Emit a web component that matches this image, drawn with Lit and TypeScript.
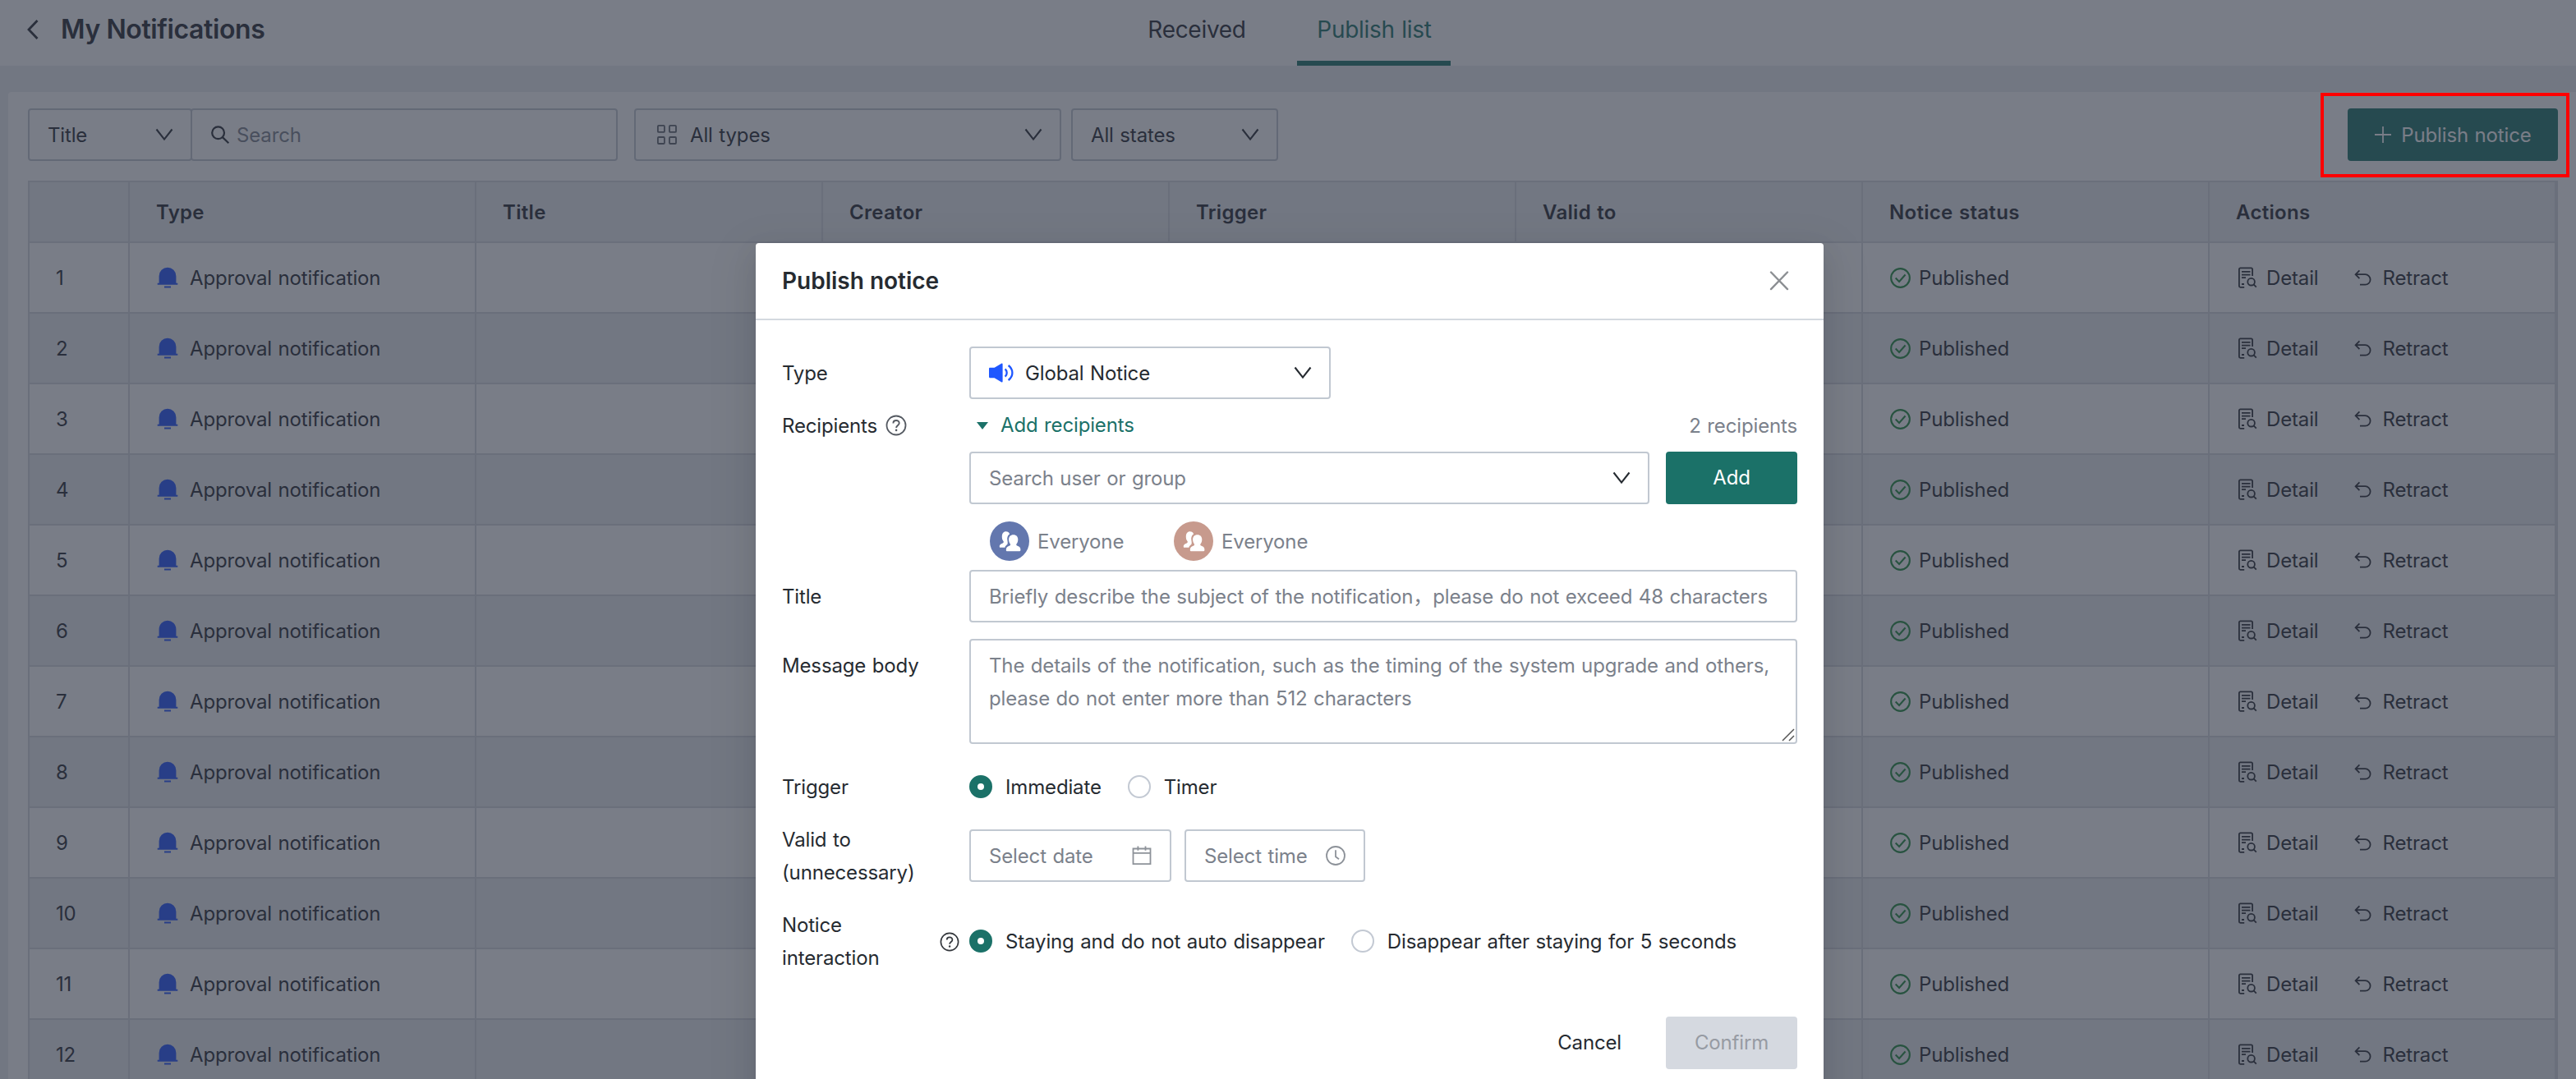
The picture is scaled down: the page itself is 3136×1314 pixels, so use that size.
import { LitElement, html, css, svg } from "lit";
import { customElement, property } from "lit/decorators.js";

const ROWS = Array.from({ length: 12 }, (_, i) => i + 1);
const COLUMNS = ["", "Type", "Title", "Creator", "Trigger", "Valid to", "Notice status", "Actions"];

const icons: Record<string, { box: string; body: unknown }> = {
  back: {
    box: "0 0 16 26",
    body: svg`<path d="M13.5 2 3 13l10.5 11" fill="none" stroke="currentColor" stroke-width="2.8"/>`,
  },
  chevron: {
    box: "0 0 22 16",
    body: svg`<path d="M1.5 1.5 11 13.6 20.5 1.5" fill="none" stroke="currentColor" stroke-width="2.1"/>`,
  },
  search: {
    box: "0 0 24 24",
    body: svg`<circle cx="9.6" cy="9.8" r="7.4" fill="none" stroke="currentColor" stroke-width="2.2"/><path d="m14.9 15.1 7.4 7.2" stroke="currentColor" stroke-width="2.2"/>`,
  },
  grid: {
    box: "0 0 24 24",
    body: svg`<g fill="none" stroke="currentColor" stroke-width="1.8"><rect x=".9" y=".9" width="8" height="8" rx="1"/><rect x="15" y=".9" width="8" height="8" rx="1"/><rect x=".9" y="15" width="8" height="8" rx="1"/><rect x="15" y="15" width="8" height="8" rx="1"/></g>`,
  },
  plus: {
    box: "0 0 22 22",
    body: svg`<path d="M11 1v20M1 11h20" stroke="currentColor" stroke-width="1.8"/>`,
  },
  bell: {
    box: "0 0 26 26",
    body: svg`<path d="M2.600 19.800V11.200a10.400 10.400 0 0 1 20.800 0v8.600h1.900v2H.7v-2zM9 23.400h8v2.200H9z" fill="currentColor"/>`,
  },
  check: {
    box: "0 0 24 24",
    body: svg`<circle cx="12" cy="12" r="10.9" fill="none" stroke="currentColor" stroke-width="2"/><path d="m6.400 12 4.200 4.200 7.200-8" fill="none" stroke="currentColor" stroke-width="2"/>`,
  },
  detail: {
    box: "0 0 24 26",
    body: svg`<g fill="none" stroke="currentColor" stroke-width="1.8"><path d="M8.200 24.800H3.400a1.500 1.500 0 0 1-1.500-1.500V2.900a1.500 1.500 0 0 1 1.500-1.500h13.200a1.500 1.500 0 0 1 1.500 1.500v8"/><path d="M5 5.800h10.500M5 9.600h10.500M5 13.200h5M5 21h3"/><circle cx="16.6" cy="18.2" r="4.3"/><path d="m19.600 21.400 3.200 3.200"/></g>`,
  },
  retract: {
    box: "0 0 22 20",
    body: svg`<path d="M6.400 1.300 1.600 6.200l4.800 4.900M1.800 6.200h11.600a6.200 6.200 0 0 1 0 12.400H7" fill="none" stroke="currentColor" stroke-width="1.8"/>`,
  },
  close: {
    box: "0 0 24 24",
    body: svg`<path d="m2 1.500 20 20.600M22 1.500 2 22.100" stroke="currentColor" stroke-width="2.4" stroke-linecap="round"/>`,
  },
  speaker: {
    box: "0 0 30 24",
    body: svg`<path d="M1.200 5.800h5.400L15.400.5c.6-.3 1.200 0 1.200.7v21.600c0 .7-.6 1-1.200.7l-8.800-5.300H1.200c-.7 0-1.200-.5-1.200-1.200V7c0-.7.5-1.200 1.200-1.200z" fill="currentColor"/><path d="M19.600 7.400c2.800 2.400 2.800 6.800 0 9.200M23.600 3c6.400 4.800 6.400 13.200 0 18" fill="none" stroke="currentColor" stroke-width="2.3"/>`,
  },
  help: {
    box: "0 0 26 26",
    body: svg`<circle cx="13" cy="13" r="11.5" fill="none" stroke="currentColor" stroke-width="1.8"/><path d="M9.400 10.400c0-4.600 7.300-4.500 7.300-.2 0 2.800-3.600 2.800-3.600 5.900" fill="none" stroke="currentColor" stroke-width="1.9"/><circle cx="13.1" cy="18.9" r="1.3" fill="currentColor"/>`,
  },
  caret: {
    box: "0 0 14 9",
    body: svg`<path d="M0 0h14L7 9z" fill="currentColor"/>`,
  },
  people: {
    box: "0 0 48 48",
    body: svg`<g fill="#fff"><path d="M19.600 12.200c2.600 0 4.400 1.600 4.400 3.300-2.400 1.400-3.200 4.600-2.600 7.600.3 1.600.5 3 .2 4.400-1.300 1.700-2.800 2-3.200 4.200h-6.400c-.9-2.400.5-4 3.300-5 1.600-.6 1.900-1.500 1.200-2.600-1.300-1.600-1.800-3.600-1.700-5.800.1-3.800 1.800-6.100 4.800-6.100z"/><path d="M28.700 16.200c3.600 0 5.600 2.300 5.600 5.800 0 2.200-.6 3.900-1.700 5.300-.7 1.100-.4 1.900 1 2.500 2.600 1 4 2.100 3.800 5.200-.1 1-.6 1.300-1.700 1.300H21.400c-1.100 0-1.600-.4-1.600-1.300-.1-3 1.300-4.300 3.900-5.200 1.500-.6 1.700-1.500 1-2.600-1.100-1.500-1.600-3.200-1.600-5.200 0-3.500 2-5.800 5.600-5.800z"/></g>`,
  },
  calendar: {
    box: "0 0 24 26",
    body: svg`<g fill="none" stroke="currentColor" stroke-width="1.8"><path d="M1.500 4.500h21v18.600h-21zM1.500 9.800h21M7.400 1.600v5.200M16.500 1.600v5.200"/></g>`,
  },
  clock: {
    box: "0 0 24 24",
    body: svg`<g fill="none" stroke="currentColor" stroke-width="1.8"><circle cx="12" cy="12" r="11"/><path d="M12 5.200v8l4 3"/></g>`,
  },
  resize: {
    box: "0 0 16 16",
    body: svg`<path d="M1 15 15 1M9 15l6-6" stroke="currentColor" stroke-width="1.5"/>`,
  },
};

@customElement("ui-icon")
class UiIcon extends LitElement {
  @property() name = "";
  static styles = css`
    :host { display: inline-flex; flex: none; }
    svg { width: 100%; height: 100%; display: block; }
  `;
  render() {
    const icon = icons[this.name];
    return icon ? html`<svg viewBox=${icon.box}>${icon.body}</svg>` : null;
  }
}

@customElement("ui-radio")
class UiRadio extends LitElement {
  @property({ type: Boolean }) checked = false;
  static styles = css`
    :host { display: flex; align-items: center; gap: 16px; }
    .dot { box-sizing: border-box; width: 28px; height: 28px; border-radius: 50%; border: 2px solid #c3c9d3; background: #fff; }
    .on { border: 10px solid #1b7168; }
    .text { padding-top: 2px; }
  `;
  render() {
    return html`<span class="dot ${this.checked ? "on" : ""}"></span><span class="text"><slot></slot></span>`;
  }
}

@customElement("notice-table")
class NoticeTable extends LitElement {
  static styles = css`
    :host { display: block; border: 2px solid #d5d7dd; border-bottom: 0; }
    .row { display: grid; grid-template-columns: 122px repeat(7, 422px); height: 86px; }
    .head { height: 74px; font-weight: 600; letter-spacing: 0.3px; }
    .head, .row:nth-child(odd) { background: #ecedf0; }
    .cell { box-sizing: border-box; display: flex; align-items: center; padding: 0 0 0 32px; border-right: 2px solid #d5d7dd; border-bottom: 2px solid #d5d7dd; }
    .text { padding-top: 2px; }
    .bell { width: 26px; height: 26px; margin: 0 14px 0 1px; color: #1f52ff; }
    .ok { width: 25px; height: 25px; margin: 0 10px 0 1px; color: #1f8a3c; }
    .doc { width: 24px; height: 26px; margin: 0 11px 0 2px; }
    .undo { width: 22px; height: 20px; margin: 0 12px 0 44px; }
  `;
  render() {
    return html`
      <div class="row head">${COLUMNS.map((c) => html`<div class="cell"><span class="text">${c}</span></div>`)}</div>
      ${ROWS.map(
        (n) => html`<div class="row">
          <div class="cell"><span class="text">${n}</span></div>
          <div class="cell"><ui-icon class="bell" name="bell"></ui-icon><span class="text">Approval notification</span></div>
          <div class="cell"></div>
          <div class="cell"></div>
          <div class="cell"></div>
          <div class="cell"></div>
          <div class="cell"><ui-icon class="ok" name="check"></ui-icon><span class="text">Published</span></div>
          <div class="cell">
            <ui-icon class="doc" name="detail"></ui-icon><span class="text">Detail</span>
            <ui-icon class="undo" name="retract"></ui-icon><span class="text">Retract</span>
          </div>
        </div>`
      )}
    `;
  }
}

@customElement("publish-dialog")
class PublishDialog extends LitElement {
  static styles = css`
    :host {
      display: block; box-sizing: border-box; width: 1300px; height: 1100px; background: #fff; color: #262b31;
      border-radius: 4px; box-shadow: 0 6px 12px -8px rgba(0, 0, 0, 0.12), 0 12px 32px rgba(0, 0, 0, 0.08), 0 18px 56px 16px rgba(0, 0, 0, 0.05);
    }
    .title { box-sizing: border-box; height: 94px; padding: 0 42px 0 32px; display: flex; align-items: center; justify-content: space-between; border-bottom: 2px solid #d4d9df; font-size: 28px; font-weight: 600; letter-spacing: 0; word-spacing: 0; }
    .close { width: 24px; height: 24px; color: #8c8f93; }
    .form { display: grid; grid-template-columns: 228px 1008px; padding: 32px 32px 0; grid-template-rows: 64px 64px 144px 64px 20px 128px 104px 64px 144px; }
    .text { padding-top: 2px; }
    .label { line-height: 40px; padding-top: 2px; }
    .mid { display: flex; align-items: center; }
    .label.top { padding-top: 13px; }
    .box { box-sizing: border-box; height: 64px; border: 2px solid #c1c8d1; border-radius: 4px; padding: 0 22px; display: flex; align-items: center; color: #7b818b; white-space: nowrap; }
    .type { width: 440px; color: #262b31; }
    .speaker { width: 30px; height: 24px; margin-right: 14px; color: #1f57ff; }
    .chev { width: 22px; height: 16px; margin-left: auto; margin-right: -1px; color: #262b31; }
    .help { width: 26px; height: 26px; margin-left: 10px; color: #555a62; }
    .summary { justify-content: space-between; color: #7b818b; }
    .toggle { display: flex; align-items: center; color: #1b7168; }
    .caret { width: 14px; height: 9px; margin: 0 15px 0 9px; }
    .picker { display: flex; gap: 20px; }
    .user { width: 828px; }
    .btn { box-sizing: border-box; width: 160px; height: 64px; border-radius: 4px; display: flex; align-items: center; justify-content: center; background: #1b7168; color: #fff; }
    .people { display: flex; padding: 21px 0 0 25px; color: #7b818b; }
    .person { display: flex; align-items: center; gap: 10px; width: 224px; height: 48px; }
    .avatar { width: 48px; height: 48px; border-radius: 50%; background: #6377ae; }
    .avatar.rose { background: #c79a8d; }
    .area { height: 128px; position: relative; align-items: flex-start; padding-top: 11px; line-height: 40px; }
    .resize { position: absolute; right: 1px; bottom: 1px; width: 16px; height: 16px; color: #555; }
    .radios { display: flex; align-items: center; gap: 32px; }
    .dates { display: flex; gap: 16px; }
    .date { width: 246px; }
    .time { width: 220px; }
    .mini { width: 24px; height: 26px; margin-left: auto; color: #8d9299; }
    .gap { grid-column: 1 / -1; }
    .tip { width: 24px; height: 24px; margin-left: auto; margin-right: 12px; color: #33373c; }
    .footer { display: flex; justify-content: flex-end; padding: 20px 32px 0; align-items: center; }
    .cancel { margin-right: 54px; }
    .off { background: #d5d9e0; color: #979ba3; }
  `;
  render() {
    return html`
      <div class="title"><span>Publish notice</span><ui-icon class="close" name="close"></ui-icon></div>
      <div class="form">
        <div class="mid"><span class="text">Type</span></div>
        <div class="box type">
          <ui-icon class="speaker" name="speaker"></ui-icon><span class="text">Global Notice</span><ui-icon class="chev" name="chevron"></ui-icon>
        </div>
        <div class="mid"><span class="text">Recipients</span><ui-icon class="help" name="help"></ui-icon></div>
        <div class="mid summary">
          <span class="toggle"><ui-icon class="caret" name="caret"></ui-icon>Add recipients</span><span class="text">2 recipients</span>
        </div>
        <div></div>
        <div>
          <div class="picker">
            <div class="box user"><span class="text">Search user or group</span><ui-icon class="chev" name="chevron"></ui-icon></div>
            <div class="btn">Add</div>
          </div>
          <div class="people">
            <div class="person"><ui-icon class="avatar" name="people"></ui-icon><span class="text">Everyone</span></div>
            <div class="person"><ui-icon class="avatar rose" name="people"></ui-icon><span class="text">Everyone</span></div>
          </div>
        </div>
        <div class="mid"><span class="text">Title</span></div>
        <div class="box"><span class="text">Briefly describe the subject of the notification，please do not exceed 48 characters</span></div>
        <div class="gap"></div>
        <div class="label top">Message body</div>
        <div class="box area">
          <span>The details of the notification, such as the timing of the system upgrade and others,<br />please do not enter more than 512 characters</span>
          <ui-icon class="resize" name="resize"></ui-icon>
        </div>
        <div class="mid"><span class="text">Trigger</span></div>
        <div class="radios"><ui-radio checked>Immediate</ui-radio><ui-radio>Timer</ui-radio></div>
        <div class="label mid">Valid to<br />(unnecessary)</div>
        <div class="dates">
          <div class="box date"><span class="text">Select date</span><ui-icon class="mini" name="calendar"></ui-icon></div>
          <div class="box time"><span class="text">Select time</span><ui-icon class="mini" name="clock"></ui-icon></div>
        </div>
        <div class="label mid"><span>Notice<br />interaction</span><ui-icon class="tip" name="help"></ui-icon></div>
        <div class="radios">
          <ui-radio checked>Staying and do not auto disappear</ui-radio><ui-radio>Disappear after staying for 5 seconds</ui-radio>
        </div>
      </div>
      <div class="footer"><span class="cancel">Cancel</span><span class="btn off">Confirm</span></div>
    `;
  }
}

@customElement("app-root")
class AppRoot extends LitElement {
  static styles = css`
    :host {
      display: block; position: relative; height: 1314px; overflow: hidden; background: #ecedf0; color: #24282f;
      font: 400 24px/32px Inter, "Noto Sans CJK SC", sans-serif; letter-spacing: -0.15px; word-spacing: 1px;
    }
    .bar { display: grid; grid-template-columns: 1374px 165px 40px 187px; height: 80px; background: #fff; font-size: 28px; letter-spacing: -0.3px; }
    .name { display: flex; align-items: center; font-size: 32px; font-weight: 600; padding: 0 0 8px 32px; letter-spacing: -0.4px; word-spacing: 0; }
    .back { width: 16px; height: 26px; margin-right: 26px; }
    .tab { box-sizing: border-box; display: flex; align-items: center; justify-content: center; border-bottom: 6px solid transparent; padding: 0 0 2px 1px; }
    .active { grid-column: 4; color: #1b7168; border-color: #1b7168; }
    .card { box-sizing: border-box; margin: 32px 0 0 10px; padding: 20px 22px 0 24px; border-radius: 4px 0 0 0; background: #fff; height: 1210px; }
    .filters { display: flex; margin-bottom: 24px; }
    .text { padding-top: 2px; }
    .box { box-sizing: border-box; height: 64px; border: 2px solid #c1c8d1; border-radius: 4px; padding: 0 24px 0 22px; display: flex; align-items: center; }
    .field { width: 200px; }
    .query { width: 520px; margin: 0 20px 0 -2px; }
    .hint { color: #7b818b; margin-left: 8px; }
    .types { width: 520px; margin-right: 12px; padding-left: 26px; }
    .states { width: 252px; }
    .chev { width: 22px; height: 16px; margin-left: auto; margin-right: -3px; }
    .lens { width: 24px; height: 24px; }
    .tiles { width: 24px; height: 24px; margin-right: 16px; color: #5c626b; }
    .publish { width: 256px; height: 64px; border-radius: 4px; margin-left: auto; background: #1b7168; color: #fff; display: flex; align-items: center; justify-content: center; gap: 11px; }
    .plus { width: 22px; height: 22px; }
    .mask { position: absolute; inset: 0; padding: 296px 0 0 920px; background: rgba(45, 52, 67, 0.64); }
    .marker { position: absolute; box-sizing: border-box; left: 2825px; top: 113px; width: 303px; height: 103px; border: 4px solid #f00; }
  `;
  render() {
    return html`
      <div class="bar">
        <div class="name"><ui-icon class="back" name="back"></ui-icon>My Notifications</div>
        <div class="tab">Received</div>
        <div class="tab active">Publish list</div>
      </div>
      <div class="card">
        <div class="filters">
          <div class="box field"><span class="text">Title</span><ui-icon class="chev" name="chevron"></ui-icon></div>
          <div class="box query"><ui-icon class="lens" name="search"></ui-icon><span class="text hint">Search</span></div>
          <div class="box types"><ui-icon class="tiles" name="grid"></ui-icon><span class="text">All types</span><ui-icon class="chev" name="chevron"></ui-icon></div>
          <div class="box states"><span class="text">All states</span><ui-icon class="chev" name="chevron"></ui-icon></div>
          <div class="publish"><ui-icon class="plus" name="plus"></ui-icon><span class="text">Publish notice</span></div>
        </div>
        <notice-table></notice-table>
      </div>
      <div class="mask"><publish-dialog></publish-dialog></div>
      <div class="marker"></div>
    `;
  }
}
